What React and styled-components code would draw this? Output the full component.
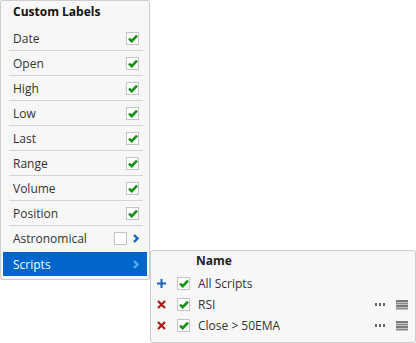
import styled, { createGlobalStyle } from "styled-components";

const GlobalStyle = createGlobalStyle`
  body {
    margin: 0;
    background: #ffffff;
    font-family: "Open Sans", "Noto Sans", sans-serif;
    font-size: 12px;
    color: #333333;
  }
`;

const Stage = styled.div`
  position: relative;
  width: 416px;
  height: 343px;
`;

const Menu = styled.div`
  width: 150px;
  height: 280px;
  box-sizing: border-box;
  background: #f7f7f7;
  border: 1px solid #cdcdcd;
  border-radius: 2px;
  padding: 0 2px;
  display: flex;
  flex-direction: column;
`;

const Title = styled.div`
  height: 25px;
  line-height: 22px;
  padding-left: 10px;
  font-weight: 700;
  color: #111111;
`;

const Row = styled.div`
  position: relative;
  display: flex;
  align-items: center;
  height: ${(p) => (p.$active ? 24 : 25)}px;
  margin-top: ${(p) => (p.$active ? 1 : 0)}px;
  padding: 0 8px 0 10px;
  background: ${(p) => (p.$active ? "#0066cc" : "transparent")};
  color: ${(p) => (p.$active ? "#ffffff" : "#333333")};

  &::after {
    content: "";
    display: ${(p) => (p.$line ? "block" : "none")};
    position: absolute;
    left: 6px;
    right: 4px;
    bottom: 0;
    height: 1px;
    background: #d4d4d4;
  }
`;

const Label = styled.span`
  flex: 1;
`;

const Box = styled.span`
  width: 11px;
  height: 11px;
  border: 1px solid #c4c4c4;
  background: #ffffff;
  display: inline-flex;
  align-items: center;
  justify-content: center;
  flex: none;
`;

const Chevron = styled.svg`
  margin-left: 6px;
  flex: none;
`;

const Sub = styled.div`
  position: absolute;
  left: 150px;
  top: 250px;
  width: 266px;
  height: 93px;
  box-sizing: border-box;
  background: #f7f7f7;
  border: 1px solid #cdcdcd;
  border-radius: 3px;
  padding: 0 7px 0 6px;
`;

const SubHead = styled.div`
  height: 22px;
  line-height: 20px;
  padding-left: 39px;
  font-weight: 700;
  color: #222222;
`;

const SubRow = styled.div`
  display: grid;
  grid-template-columns: 20px 21px 1fr 21px 12px;
  align-items: center;
  height: 21px;
`;

const Tools = styled.span`
  display: contents;
`;

function Check() {
  return (
    <svg width="10" height="9" viewBox="0 0 10 9">
      <path d="M1 4.6 L3.7 7.2 L9 1.6" fill="none" stroke="#129112" strokeWidth="2.6" />
    </svg>
  );
}

function CheckBox({ on }) {
  return <Box>{on && <Check />}</Box>;
}

function Arrow({ color }) {
  return (
    <Chevron width="6" height="9" viewBox="0 0 6 9">
      <path d="M1 1 L4.5 4.5 L1 8" fill="none" stroke={color} strokeWidth="2.4" />
    </Chevron>
  );
}

function Plus() {
  return (
    <svg width="9" height="9" viewBox="0 0 9 9">
      <path d="M4.5 0 V9 M0 4.5 H9" stroke="#1a63b0" strokeWidth="2" />
    </svg>
  );
}

function Cross() {
  return (
    <svg width="9" height="9" viewBox="0 0 9 9">
      <path d="M1 1 L8 8 M8 1 L1 8" stroke="#b01818" strokeWidth="2.2" />
    </svg>
  );
}

function Dots() {
  return (
    <svg width="10" height="3" viewBox="0 0 10 3">
      <rect x="0" y="0" width="2" height="3" fill="#666" />
      <rect x="4" y="0" width="2" height="3" fill="#666" />
      <rect x="8" y="0" width="2" height="3" fill="#666" />
    </svg>
  );
}

function Grip() {
  return (
    <svg width="12" height="10" viewBox="0 0 12 10">
      <rect y="0" width="12" height="2" fill="#7a7a7a" />
      <rect y="2.5" width="12" height="2" fill="#8a8a8a" />
      <rect y="5" width="12" height="2" fill="#7a7a7a" />
      <rect y="7.5" width="12" height="2" fill="#8a8a8a" />
    </svg>
  );
}

const labels = ["Date", "Open", "High", "Low", "Last", "Range", "Volume", "Position"];

const scripts = [
  { name: "All Scripts", add: true },
  { name: "RSI" },
  { name: "Close > 50EMA" },
];

export default function App() {
  return (
    <Stage>
      <GlobalStyle />
      <Menu>
        <Title>Custom Labels</Title>
        {labels.map((l) => (
          <Row key={l} $line>
            <Label>{l}</Label>
            <CheckBox on />
          </Row>
        ))}
        <Row>
          <Label>Astronomical</Label>
          <CheckBox />
          <Arrow color="#0a66c2" />
        </Row>
        <Row $active>
          <Label>Scripts</Label>
          <Arrow color="#59a9f0" />
        </Row>
      </Menu>
      <Sub>
        <SubHead>Name</SubHead>
        {scripts.map((s) => (
          <SubRow key={s.name}>
            {s.add ? <Plus /> : <Cross />}
            <CheckBox on />
            <Label>{s.name}</Label>
            {s.add ? (
              <span />
            ) : (
              <Tools>
                <Dots />
                <Grip />
              </Tools>
            )}
          </SubRow>
        ))}
      </Sub>
    </Stage>
  );
}
